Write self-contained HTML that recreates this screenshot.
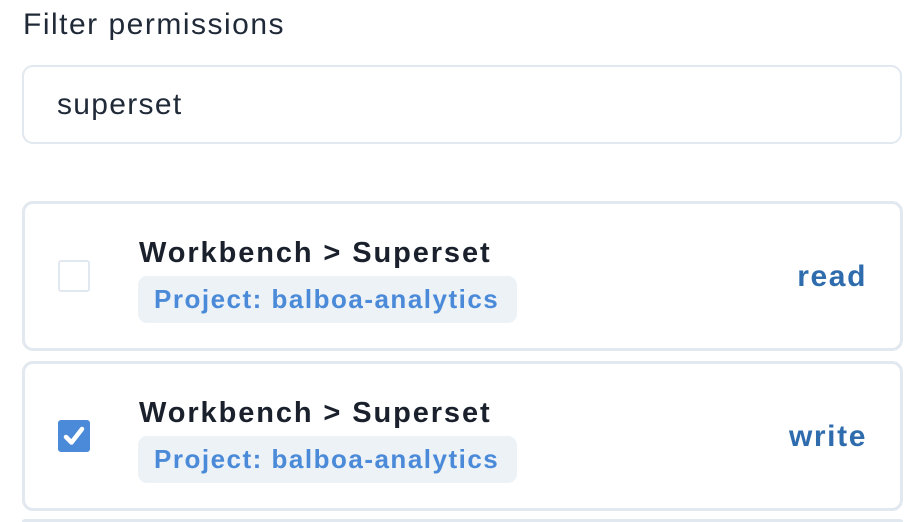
<!DOCTYPE html>
<html style="overflow:hidden;height:522px"><head><style>
html,body{margin:0;background:#fff;width:920px;height:522px;overflow:hidden;font-family:"Liberation Sans",sans-serif;color:#1a202c}
.wrap{position:relative;width:920px;height:522px;overflow:hidden}
.lbl{position:absolute;left:23px;top:8px;font-size:30px;letter-spacing:1.5px;color:#1f2937}
.inp{position:absolute;left:22px;top:65px;width:876px;height:75px;border:2px solid #e2e8f0;border-radius:11px}
.inp span{position:absolute;left:33px;top:21px;font-size:30px;letter-spacing:1.3px;color:#1f2937}
.card{position:absolute;left:22px;width:875px;height:144px;border:3px solid #e2e8f0;border-radius:11px}
.cb{position:absolute;left:33px;top:56px;width:28px;height:28px;border:2px solid #e2e8f0;border-radius:3px}
.cb.on{background:#4a8ad8;border-color:#4a8ad8}
.t{position:absolute;left:114px;top:33px;font-size:29px;letter-spacing:1.9px;font-weight:bold;color:#1a202c}
.b{position:absolute;left:113px;top:72px;height:47px;width:379px;background:#edf2f7;border-radius:9px;font-size:26px;letter-spacing:1.5px;font-weight:bold;color:#4a8ad8;line-height:47px;text-indent:16px}
.r{position:absolute;right:33px;top:56px;font-size:30px;letter-spacing:1.6px;font-weight:bold;color:#2f6cae}
</style></head><body><div class="wrap">
<div class="lbl">Filter permissions</div>
<div class="inp"><span>superset</span></div>
<div class="card" style="top:201px"><div class="cb"></div><div class="t">Workbench &gt; Superset</div><div class="b">Project: balboa-analytics</div><div class="r">read</div></div>
<div class="card" style="top:361px"><div class="cb on"><svg width="28" height="28" viewBox="0 0 28 28"><path d="M6 15l5.5 5.5L22 7" fill="none" stroke="#fff" stroke-width="4.5" stroke-linecap="round" stroke-linejoin="round"/></svg></div><div class="t">Workbench &gt; Superset</div><div class="b">Project: balboa-analytics</div><div class="r">write</div></div>
<div style="position:absolute;left:22px;top:519px;width:881px;height:3px;border-top:3px solid #e2e8f0;border-radius:11px 11px 0 0;box-sizing:border-box"></div>
</div></body></html>
